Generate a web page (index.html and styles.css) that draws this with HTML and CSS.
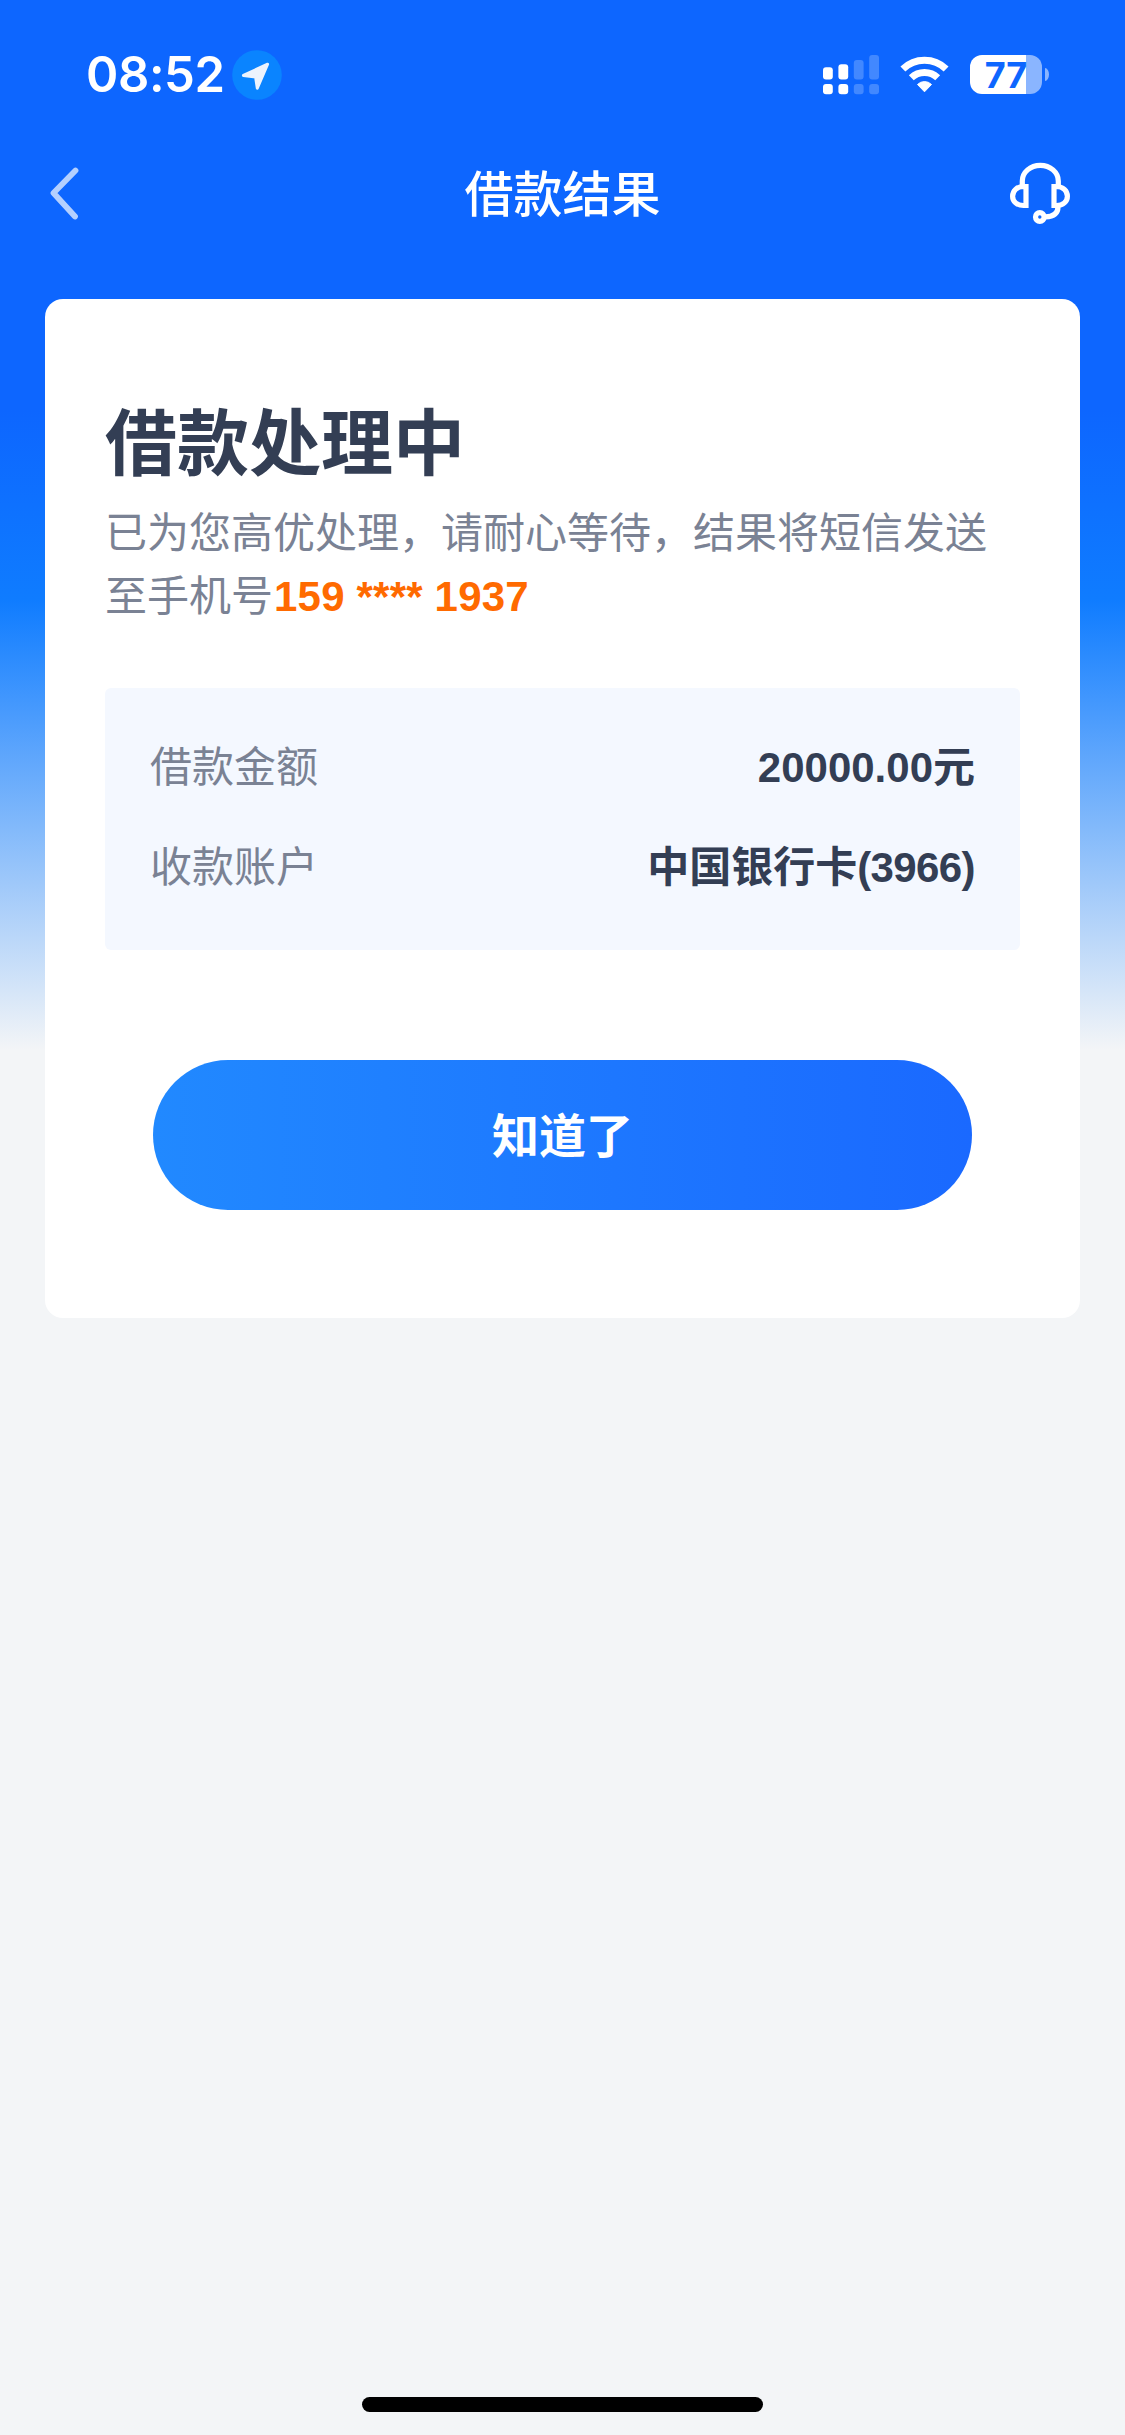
FILE: index.html
```html
<!DOCTYPE html>
<html lang="zh-CN">
<head>
<meta charset="utf-8">
<title>借款结果</title>
<link rel="stylesheet" href="styles.css">
</head>
<body>
<div class="screen">
  <div class="status">
    <div class="status-left">
      <span class="time">08:52</span>
      <svg class="location" width="50" height="50" viewBox="0 0 50 50"><circle cx="25" cy="25" r="24.8" fill="#0a84ff"/><path d="M35.6 14.2 25.3 38.2 23.6 27 11.4 25.4Z" fill="#edf3fd" stroke="#edf3fd" stroke-width="3" stroke-linejoin="round"/></svg>
    </div>
    <div class="status-right">
      <svg width="56" height="40" viewBox="0 0 56 40" fill="#fff"><rect y="12.3" width="9.8" height="12.2" rx="3"/><rect x="15.4" y="9.3" width="9.8" height="15.2" rx="3"/><rect y="29" width="9.8" height="10.2" rx="3"/><rect x="15.4" y="29" width="9.8" height="10.2" rx="3"/><g opacity=".22"><rect x="30.8" y="5" width="9.8" height="19.5" rx="3"/><rect x="46.2" width="9.8" height="24.5" rx="3"/><rect x="30.8" y="29" width="9.8" height="10.2" rx="3"/><rect x="46.2" y="29" width="9.8" height="10.2" rx="3"/></g></svg>
      <svg width="50" height="40" viewBox="0 0 50 40"><g fill="none" stroke="#fff" stroke-width="7"><path d="M2.9 14.1a31 31 0 0 1 43.2 0"/><path d="M11.3 22.800a19 19 0 0 1 26.4 0"/></g><path d="M24.5 36.800 17.500 29.500a9.800 9.800 0 0 1 14 0Z" fill="#fff" stroke="#fff" stroke-linejoin="round"/></svg>
      <div class="battery"><div class="battery-body">77</div><div class="battery-nub"></div></div>
    </div>
  </div>
  <header class="nav">
    <svg width="36" height="60" viewBox="0 0 36 60"><path d="M29.5 7.5 7.5 30 29 53.5" fill="none" stroke="#b4d0ff" stroke-width="5.8" stroke-linecap="round" stroke-linejoin="round"/></svg>
    <h1 class="nav-title">借款结果</h1>
    <svg width="62" height="62" viewBox="0 0 62 62" fill="none" stroke="#fff" stroke-width="5.2"><path d="M13.300 24.500V19a18 15.700 0 0 1 36 0v5.500"/><path d="M17 24.500h-2.500C8 24.500 3.600 28.800 3.600 34.200s4.400 9.300 10.900 9.300H17Z"/><path d="M45 24.500h2.500C54 24.500 58.400 28.800 58.400 34.200s-4.400 9.300-10.900 9.300H45Z"/><path d="M49 43.500v1.500c0 6-4.500 9.500-12.500 9.900"/><circle cx="30.800" cy="55" r="4.300"/></svg>
  </header>
  <main class="card">
    <h2 class="heading">借款处理中</h2>
    <p class="message">已为您高优处理，请耐心等待，结果将短信发送至手机号<b class="phone">159 **** 1937</b></p>
    <dl class="details">
      <div class="row"><dt>借款金额</dt><dd>20000.00元</dd></div>
      <div class="row"><dt>收款账户</dt><dd>中国银行卡<span class="card-number">(3966)</span></dd></div>
    </dl>
    <button class="confirm">知道了</button>
  </main>
  <div class="home-indicator"></div>
</div>
</body>
</html>
```
FILE: styles.css
```css
* {
  box-sizing: border-box;
  margin: 0;
}

svg {
  display: block;
}

.screen {
  display: flex;
  flex-direction: column;
  width: 1125px;
  height: 2435px;
  padding-bottom: 23px;
  background: linear-gradient(180deg, #0d66ff 0, #0d66ff 410px, #0f7cff 600px, #f3f5f7 1050px);
  font-family: "Liberation Sans", "Noto Sans CJK SC", sans-serif;
}

.status {
  display: flex;
  justify-content: space-between;
  height: 145px;
  padding: 50px 76px 0 86px;
  color: #fff;
  font-family: Inter, sans-serif;
}

.status-left {
  display: flex;
  gap: 8px;
  height: 50px;
  align-items: center;
}

.time {
  width: 138px;
  font-size: 49px;
  font-weight: 600;
  letter-spacing: -0.4px;
  line-height: 50px;
  white-space: nowrap;
}

.status-right {
  display: flex;
  align-items: flex-start;
  gap: 21px;
  padding-top: 5px;
}

.battery {
  display: flex;
  align-items: center;
  gap: 3px;
  margin-left: -1px;
}

.battery-body {
  width: 72px;
  height: 39px;
  border-radius: 12px;
  background: linear-gradient(90deg, #fff 56px, #8ab5ff 56px);
  color: #0d66ff;
  font-size: 36px;
  font-weight: 700;
  line-height: 40px;
  text-align: center;
}

.battery-nub {
  width: 4px;
  height: 13px;
  border-radius: 0 4px 4px 0 / 0 6.5px 6.5px 0;
  background: #8ab5ff;
}

.nav {
  display: flex;
  align-items: center;
  justify-content: space-between;
  height: 96px;
  margin-bottom: 58px;
  padding: 0 54px 0 46px;
  color: #fff;
}

.nav-title {
  margin-left: 34px;
  padding-top: 4px;
  font-size: 49px;
  font-weight: 500;
  line-height: 96px;
}

.card {
  display: flex;
  flex-direction: column;
  height: 1019px;
  margin: 0 45px;
  padding: 95px 60px 0;
  border-radius: 18px;
  background: #fff;
}

.heading {
  color: #333e54;
  font-size: 72px;
  font-weight: 700;
  line-height: 100px;
}

.message {
  margin-top: 8px;
  color: #7a8294;
  font-size: 42px;
  font-weight: 400;
  line-height: 63px;
}

.phone {
  margin-left: 1px;
  color: #ff6a00;
  font-weight: 700;
  letter-spacing: 0.2px;
}

.details {
  display: flex;
  flex-direction: column;
  gap: 37px;
  height: 262px;
  margin-top: 60px;
  padding: 48px 45px;
  border-radius: 6px;
  background: #f4f8ff;
  font-size: 42px;
  line-height: 63px;
}

.row {
  display: flex;
  justify-content: space-between;
}

.row dt {
  color: #7a8294;
  font-weight: 400;
}

.row dd {
  color: #333e54;
  font-weight: 700;
}

.card-number {
  letter-spacing: -0.6px;
}

.confirm {
  height: 150px;
  margin: 110px 48px 0;
  padding: 0 0 6px;
  border: 0;
  border-radius: 75px;
  background: linear-gradient(90deg, #2189ff, #1a69ff);
  color: #fff;
  font-family: inherit;
  font-size: 47px;
  font-weight: 700;
}

.home-indicator {
  width: 401px;
  height: 15px;
  margin: auto auto 0;
  border-radius: 8px;
  background: #000;
}
```
